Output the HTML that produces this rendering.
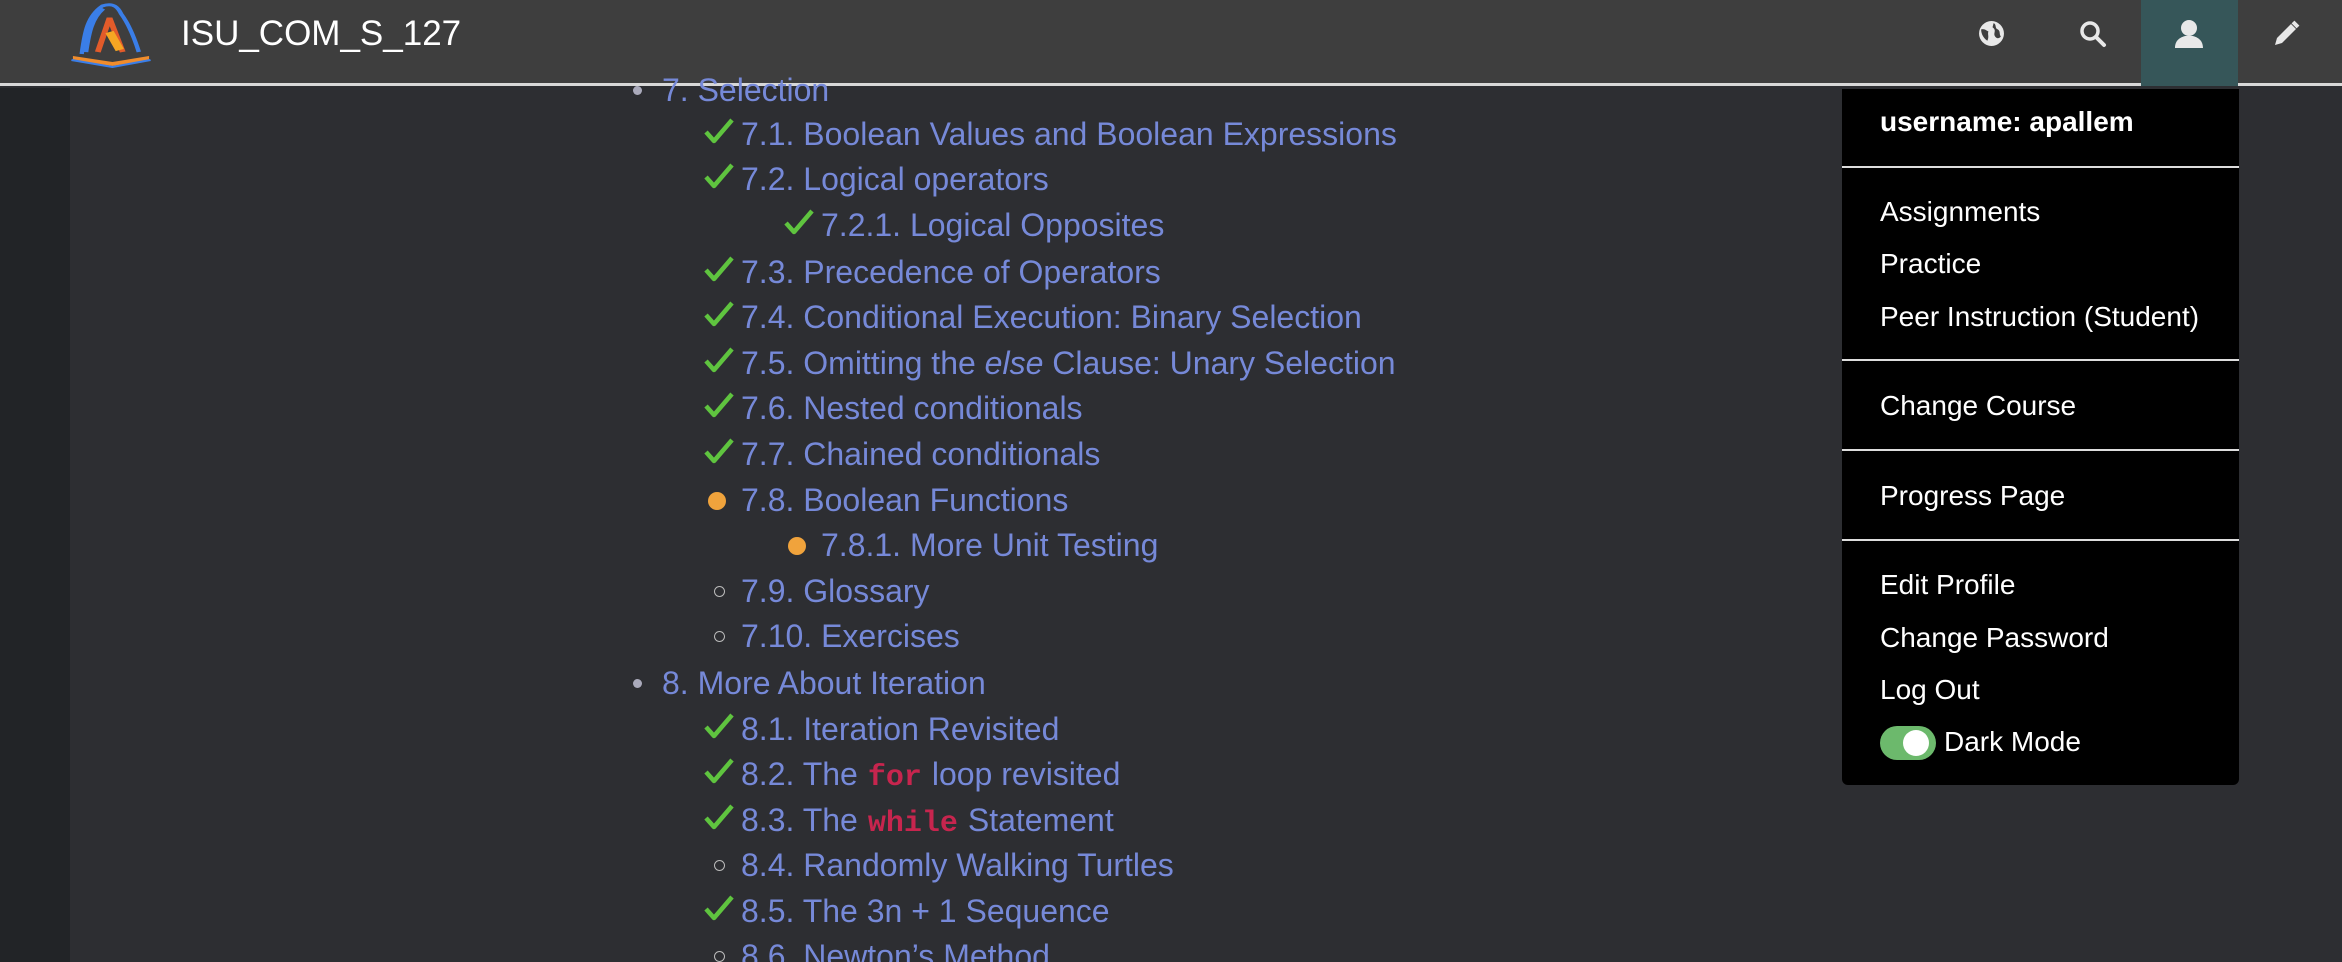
<!DOCTYPE html>
<html><head><meta charset="utf-8"><style>
*{margin:0;padding:0;box-sizing:border-box}
html,body{width:2342px;height:962px;overflow:hidden}
body{background:#2d2e32;font-family:"Liberation Sans",Arial,sans-serif}
#w{position:relative;width:2342px;height:962px;overflow:hidden}
.strip{position:absolute;left:0;top:88px;width:70px;height:874px;background:#222427}
.nav{position:absolute;left:0;top:0;width:2342px;height:86px;background:#3e3e3e;border-bottom:3px solid #d8d8d8}
.title{position:absolute;left:181px;top:5px;font-size:35px;color:#fff;line-height:58px}
.ubtn{position:absolute;left:2141px;top:0;width:97px;height:86px;background:#365659}
.r{position:absolute;font-size:32px;line-height:46px;color:#7689d8;white-space:nowrap}
.ck{position:absolute;width:30px;height:28px}
.dot{position:absolute;width:18px;height:18px;border-radius:50%;background:#f0a33c}
.oc{position:absolute;width:11px;height:11px;border-radius:50%;border:1.5px solid #bbb}
.bl{position:absolute;width:9px;height:9px;border-radius:50%;background:#aab}
code{font-family:"Liberation Mono",monospace;color:#c7254e;font-weight:bold;padding:0 10px;font-size:30px}
.dd{position:absolute;left:1842px;top:89px;width:397px;height:696px;background:#000;border-radius:0 0 6px 6px}
.mi{position:absolute;left:38px;font-size:28px;color:#fff;line-height:40px;white-space:nowrap}
.hr{position:absolute;left:0;width:397px;height:2px;background:#ddd}
</style></head><body><div id="w">
<svg width="0" height="0" style="position:absolute"><defs><symbol id="c" viewBox="0 0 30 28"><path d="M2 15 L10 24 L28 3" fill="none" stroke="#5fc43f" stroke-width="4.5" stroke-linejoin="round"/></symbol></defs></svg>
<div class="strip"></div>
<div class="nav">
<svg style="position:absolute;left:70px;top:2px" width="82" height="66" viewBox="0 0 56 66" preserveAspectRatio="none">
<path d="M8 52 C10 30 12 14 22 4 C30 0 33 6 35 12 C40 22 44 36 47 50" fill="none" stroke="#3a7ee8" stroke-width="3"/>
<path d="M10 50 C12 30 14 16 22 6" stroke="#3a7ee8" stroke-width="5" fill="none"/>
<path d="M19 50 L27 16 L36 50" stroke="#e25b2a" stroke-width="4" fill="none"/>
<path d="M27 30 L34 48" stroke="#f5a623" stroke-width="6"/>
<path d="M2 54 L29 60 L54 54 L54 58 L29 64 L2 58 Z" fill="#f08c2c"/>
<path d="M1 58 L29 65 L55 58" stroke="#3a7ee8" stroke-width="2" fill="none"/>
</svg>
<div class="title">ISU_COM_S_127</div>
<svg style="position:absolute;left:1978px;top:20px" width="27" height="27" viewBox="0 0 26 26"><circle cx="13" cy="13" r="12" fill="#e8e8e8"/><path d="M3 9 C6 8 8 10 10 11 C9 14 11 16 9 20 C6 18 3 14 3 9 Z M15 3 C18 4 16 8 19 9 C22 11 20 13 22 16 C19 19 17 17 16 15 C15 12 18 10 14 7 Z" fill="#3e3e3e"/></svg>
<svg style="position:absolute;left:2079px;top:20px" width="28" height="28" viewBox="0 0 28 28"><circle cx="11" cy="11" r="8" fill="none" stroke="#e8e8e8" stroke-width="3.5"/><path d="M17 17 L25 25" stroke="#e8e8e8" stroke-width="4" stroke-linecap="round"/></svg>
<div class="ubtn"><svg style="position:absolute;left:33px;top:19px" width="30" height="30" viewBox="0 0 30 30"><circle cx="15" cy="9" r="8" fill="#e8e8e8"/><path d="M1 29 C1 20 8 18 11 17 L19 17 C22 18 29 20 29 29 Z" fill="#e8e8e8"/></svg></div>
<svg style="position:absolute;left:2272px;top:20px" width="28" height="28" viewBox="0 0 28 28"><path d="M3 25 L5 18 L19 4 L24 9 L10 23 Z" fill="#e8e8e8"/><path d="M21 2 L26 7" stroke="#e8e8e8" stroke-width="4"/></svg>
</div>

<div class="bl" style="left:633px;top:86px"></div><div class="r" style="left:662px;top:67px">7. Selection</div>
<svg class="ck" style="left:704px;top:117px"><use href="#c"/></svg><div class="r" style="left:741px;top:111px">7.1. Boolean Values and Boolean Expressions</div>
<svg class="ck" style="left:704px;top:162px"><use href="#c"/></svg><div class="r" style="left:741px;top:156px">7.2. Logical operators</div>
<svg class="ck" style="left:784px;top:208px"><use href="#c"/></svg><div class="r" style="left:821px;top:202px">7.2.1. Logical Opposites</div>
<svg class="ck" style="left:704px;top:255px"><use href="#c"/></svg><div class="r" style="left:741px;top:249px">7.3. Precedence of Operators</div>
<svg class="ck" style="left:704px;top:300px"><use href="#c"/></svg><div class="r" style="left:741px;top:294px">7.4. Conditional Execution: Binary Selection</div>
<svg class="ck" style="left:704px;top:346px"><use href="#c"/></svg><div class="r" style="left:741px;top:340px">7.5. Omitting the <i>else</i> Clause: Unary Selection</div>
<svg class="ck" style="left:704px;top:391px"><use href="#c"/></svg><div class="r" style="left:741px;top:385px">7.6. Nested conditionals</div>
<svg class="ck" style="left:704px;top:437px"><use href="#c"/></svg><div class="r" style="left:741px;top:431px">7.7. Chained conditionals</div>
<div class="dot" style="left:708px;top:492px"></div><div class="r" style="left:741px;top:477px">7.8. Boolean Functions</div>
<div class="dot" style="left:788px;top:537px"></div><div class="r" style="left:821px;top:522px">7.8.1. More Unit Testing</div>
<div class="oc" style="left:714px;top:586px"></div><div class="r" style="left:741px;top:568px">7.9. Glossary</div>
<div class="oc" style="left:714px;top:631px"></div><div class="r" style="left:741px;top:613px">7.10. Exercises</div>
<div class="bl" style="left:633px;top:679px"></div><div class="r" style="left:662px;top:660px">8. More About Iteration</div>
<svg class="ck" style="left:704px;top:712px"><use href="#c"/></svg><div class="r" style="left:741px;top:706px">8.1. Iteration Revisited</div>
<svg class="ck" style="left:704px;top:757px"><use href="#c"/></svg><div class="r" style="left:741px;top:751px">8.2. The<code>for</code>loop revisited</div>
<svg class="ck" style="left:704px;top:803px"><use href="#c"/></svg><div class="r" style="left:741px;top:797px">8.3. The<code>while</code>Statement</div>
<div class="oc" style="left:714px;top:860px"></div><div class="r" style="left:741px;top:842px">8.4. Randomly Walking Turtles</div>
<svg class="ck" style="left:704px;top:894px"><use href="#c"/></svg><div class="r" style="left:741px;top:888px">8.5. The 3n + 1 Sequence</div>
<div class="oc" style="left:714px;top:951px"></div><div class="r" style="left:741px;top:933px">8.6. Newton’s Method</div>

<div class="dd">
<div class="mi" style="top:13px;font-weight:bold">username: apallem</div>
<div class="hr" style="top:77px"></div>
<div class="mi" style="top:103px">Assignments</div>
<div class="mi" style="top:155px">Practice</div>
<div class="mi" style="top:208px">Peer Instruction (Student)</div>
<div class="hr" style="top:270px"></div>
<div class="mi" style="top:297px">Change Course</div>
<div class="hr" style="top:360px"></div>
<div class="mi" style="top:387px">Progress Page</div>
<div class="hr" style="top:450px"></div>
<div class="mi" style="top:476px">Edit Profile</div>
<div class="mi" style="top:529px">Change Password</div>
<div class="mi" style="top:581px">Log Out</div>
<div style="position:absolute;left:38px;top:637px;width:56px;height:34px;border-radius:17px;background:#6cb96c"><div style="position:absolute;left:23px;top:4px;width:26px;height:26px;border-radius:50%;background:#fff"></div></div>
<div class="mi" style="top:633px;left:102px">Dark Mode</div>
</div>
</div></body></html>
